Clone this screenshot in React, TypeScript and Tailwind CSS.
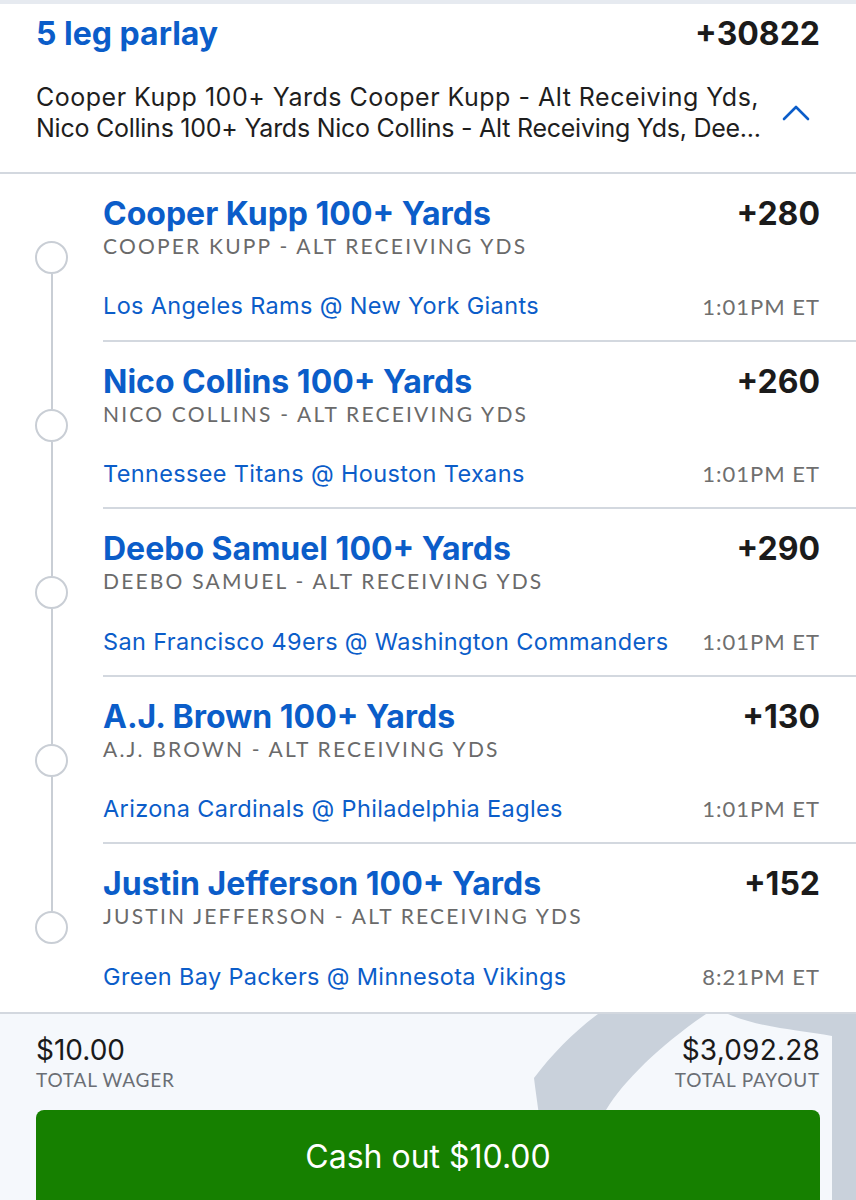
import React from "react";

const legs = [
  { title: "Cooper Kupp 100+ Yards", odds: "+280", sub: "Cooper Kupp - Alt Receiving Yds", game: "Los Angeles Rams @ New York Giants", time: "1:01PM ET" },
  { title: "Nico Collins 100+ Yards", odds: "+260", sub: "Nico Collins - Alt Receiving Yds", game: "Tennessee Titans @ Houston Texans", time: "1:01PM ET" },
  { title: "Deebo Samuel 100+ Yards", odds: "+290", sub: "Deebo Samuel - Alt Receiving Yds", game: "San Francisco 49ers @ Washington Commanders", time: "1:01PM ET" },
  { title: "A.J. Brown 100+ Yards", odds: "+130", sub: "A.J. Brown - Alt Receiving Yds", game: "Arizona Cardinals @ Philadelphia Eagles", time: "1:01PM ET" },
  { title: "Justin Jefferson 100+ Yards", odds: "+152", sub: "Justin Jefferson - Alt Receiving Yds", game: "Green Bay Packers @ Minnesota Vikings", time: "8:21PM ET" },
];

export default function App() {
  return (
    <div className="w-[856px] h-[1200px] overflow-hidden bg-white flex flex-col font-['Inter','Liberation_Sans',sans-serif]">
      <div className="h-[4px] bg-[#e6eaf0] shrink-0" />
      <div className="px-[36px] pt-[10px] shrink-0">
        <div className="flex items-center justify-between h-[40px]">
          <span className="text-[32px] font-bold text-[#0b5dc9]">5 leg parlay</span>
          <span className="text-[32px] font-bold text-[#1b1b1b]">+30822</span>
        </div>
        <div className="flex items-center mt-[28px] pb-[28px]">
          <div className="flex-1 min-w-0 text-[25px] leading-[31px] text-[#1e1e1e] whitespace-nowrap">
            <div className="tracking-[0.5px]">Cooper Kupp 100+ Yards Cooper Kupp - Alt Receiving Yds,</div>
            <div className="tracking-[-0.25px]">Nico Collins 100+ Yards Nico Collins - Alt Receiving Yds, Dee...</div>
          </div>
          <svg width="28" height="16" viewBox="0 0 28 16" className="ml-[8px] mr-[10px] shrink-0">
            <polyline points="2,14 14,2 26,14" fill="none" stroke="#0b5dc9" strokeWidth="2.6" strokeLinecap="round" strokeLinejoin="round" />
          </svg>
        </div>
      </div>
      <div className="h-[2px] bg-[#d3d8df] shrink-0" />
      <div className="shrink-0">
        {legs.map((l, i) => (
          <div key={i} className="flex h-[167.6px]">
            <div className="w-[103px] shrink-0 flex flex-col items-center">
              <div className={"w-[2px] h-[67px] " + (i === 0 ? "bg-transparent" : "bg-[#c9ced5]")} />
              <div className="w-[33px] h-[33px] rounded-full border-2 border-[#c9ced5] bg-white shrink-0" />
              <div className={"w-[2px] flex-1 " + (i === legs.length - 1 ? "bg-transparent" : "bg-[#c9ced5]")} />
            </div>
            <div className={"flex-1 pr-[36px] pt-[23px] " + (i === legs.length - 1 ? "" : "border-b-2 border-[#d3d8df]")}>
              <div className="flex items-center justify-between h-[34px]">
                <span className="text-[32px] font-bold text-[#0b5dc9]">{l.title}</span>
                <span className="text-[32px] font-bold text-[#1b1b1b]">{l.odds}</span>
              </div>
              <div className="font-['Lato',sans-serif] text-[21px] leading-[30px] tracking-[2.2px] uppercase text-[#6a6a6a]">{l.sub}</div>
              <div className="flex items-center justify-between mt-[30px] h-[30px]">
                <span className="text-[23.5px] tracking-[0.35px] text-[#0b5dc9]">{l.game}</span>
                <span className="font-['Lato',sans-serif] text-[22px] tracking-[1px] text-[#6f6f6f]">{l.time}</span>
              </div>
            </div>
          </div>
        ))}
      </div>
      <div className="flex-1 relative overflow-hidden border-t-2 border-[#d3d8df] bg-[#f5f8fc]">
        <svg className="absolute left-0 top-0" width="856" height="200" viewBox="0 0 856 200">
          <path d="M598,0 L706,0 C662,30 624,66 606,96 L598,200 L556,200 C546,150 538,96 534,64 C552,40 576,16 598,0 Z" fill="#c9d1db" />
          <path d="M728,0 L856,0 L856,200 L832,200 L832,22 C800,16 760,14 728,0 Z" fill="#c9d1db" />
        </svg>
        <div className="relative px-[36px] pt-[20px]">
          <div className="flex justify-between">
            <div>
              <div className="text-[28px] leading-[32px] text-[#1a1a1a]">$10.00</div>
              <div className="font-['Lato',sans-serif] text-[19px] leading-[28px] tracking-[0.8px] text-[#6b6f75]">TOTAL WAGER</div>
            </div>
            <div className="text-right">
              <div className="text-[28px] leading-[32px] tracking-[0.2px] text-[#1a1a1a]">$3,092.28</div>
              <div className="font-['Lato',sans-serif] text-[19px] leading-[28px] tracking-[0.8px] text-[#6b6f75]">TOTAL PAYOUT</div>
            </div>
          </div>
          <div className="mt-[16px] h-[100px] rounded-[8px] bg-[#168000] flex items-start justify-center pt-[28px]">
            <span className="text-[32px] leading-[38px] text-white">Cash out $10.00</span>
          </div>
        </div>
      </div>
    </div>
  );
}
